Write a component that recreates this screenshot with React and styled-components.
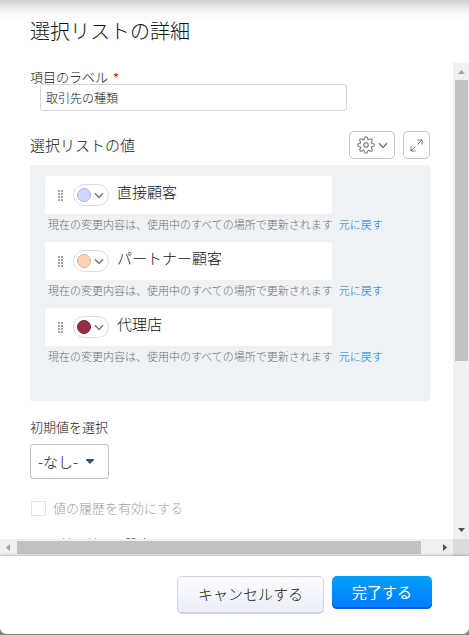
import React, { useState } from 'react';
import styled, { createGlobalStyle } from 'styled-components';
import { FiSettings } from 'react-icons/fi';


const initialValues = [
  { id: 1, label: '直接顧客', color: '#ced9ff', ring: '#a9b4dc' },
  { id: 2, label: 'パートナー顧客', color: '#ffd3b6', ring: '#dcae92' },
  { id: 3, label: '代理店', color: '#982b45', ring: '#7d2339' },
];

const App = () => {
  const [fieldLabel, setFieldLabel] = useState('取引先の種類');
  const [values, setValues] = useState(initialValues);

  const renameValue = (id, label) => {
    setValues(values.map((value) => (value.id === id ? { ...value, label } : value)));
  };

  return (
    <>
      <GlobalStyle />
      <Dialog role="dialog" aria-labelledby="dialog-title">
        <Header>
          <h1 id="dialog-title">選択リストの詳細</h1>
        </Header>

        <ScrollFrame>
          <Content>
            <FieldLabel htmlFor="field-label">
              項目のラベル <em>*</em>
            </FieldLabel>
            <TextInput
              id="field-label"
              value={fieldLabel}
              onChange={(e) => setFieldLabel(e.target.value)}
            />

            <SectionHead>
              <h2>選択リストの値</h2>
              <ToolButton type="button" aria-label="設定">
                <FiSettings size={18} strokeWidth={1.5} />
                <Chevron />
              </ToolButton>
              <ToolButton type="button" aria-label="拡大" $square>
                <ExpandIcon />
              </ToolButton>
            </SectionHead>

            <ValuePanel>
              {values.map((value) => (
                <ValueItem key={value.id} value={value} onRename={renameValue} />
              ))}
            </ValuePanel>

            <DefaultLabel htmlFor="default-value">初期値を選択</DefaultLabel>
            <SelectBox>
              <select id="default-value" defaultValue="">
                <option value="">-なし-</option>
              </select>
              <svg width="8" height="5" viewBox="0 0 8 5" aria-hidden="true">
                <path d="M0 0h8v1L4 5 0 1z" fill="#34566f" />
              </svg>
            </SelectBox>

            <CheckRow>
              <input type="checkbox" id="history" disabled />
              <label htmlFor="history">値の履歴を有効にする</label>
            </CheckRow>

            <SortHeading>並べ替えの設定</SortHeading>
          </Content>

          <VerticalBar>
            <Arrow direction="up" color="#a3a3a3" />
            <Track $vertical>
              <Thumb $size="63.5%" $vertical />
            </Track>
            <Arrow direction="down" color="#505050" />
          </VerticalBar>
          <HorizontalBar>
            <Arrow direction="left" color="#a3a3a3" />
            <Track>
              <Thumb $size="96.5%" />
            </Track>
            <Arrow direction="right" color="#505050" />
          </HorizontalBar>
          <Corner />
        </ScrollFrame>

        <Footer>
          <CancelButton type="button">キャンセルする</CancelButton>
          <DoneButton type="button">完了する</DoneButton>
        </Footer>
      </Dialog>
    </>
  );
};


const ValueItem = ({ value, onRename }) => {
  return (
    <div>
      <ValueCard>
        <Grip />
        <ColorPicker type="button" aria-label="色">
          <Swatch $color={value.color} $ring={value.ring} />
          <Chevron />
        </ColorPicker>
        <input
          aria-label="値"
          value={value.label}
          onChange={(e) => onRename(value.id, e.target.value)}
        />
      </ValueCard>
      <Hint>
        <span>現在の変更内容は、使用中のすべての場所で更新されます</span>
        <a href="#undo">元に戻す</a>
      </Hint>
    </div>
  );
};

const Chevron = () => (
  <svg width="10" height="7" viewBox="0 0 10 7" fill="none" aria-hidden="true">
    <path d="M1 1.2 5 5.4 9 1.2" stroke="#777" strokeWidth="1.5" />
  </svg>
);

const ExpandIcon = () => (
  <svg width="13" height="13" viewBox="0 0 13 13" fill="none" stroke="#777" aria-hidden="true">
    <path d="M7.5 5.5 12 1M7.5 1H12V5.5M5.5 7.5 1 12M1 7.5V12H5.5" />
  </svg>
);

const Grip = () => (
  <svg width="5" height="11" viewBox="0 0 5 11" fill="#a3a3a3" aria-hidden="true">
    {[0, 3, 6, 9].map((y) => (
      <path key={y} d={`M0 ${y}h2v2h-2zM3 ${y}h2v2h-2z`} />
    ))}
  </svg>
);

const arrowPaths = {
  up: 'M5 11 8.5 7 12 11z',
  down: 'M5 6 8.5 10 12 6z',
  left: 'M10 5 6 8.5 10 12z',
  right: 'M7 5 11 8.5 7 12z',
};

const Arrow = ({ direction, color }) => (
  <svg width="17" height="17" viewBox="0 0 17 17" aria-hidden="true">
    <path d={arrowPaths[direction]} fill={color} />
  </svg>
);


const GlobalStyle = createGlobalStyle`
  * {
    box-sizing: border-box;
  }
  body {
    margin: 0;
    background: #858585;
    color: #111;
    font-family: "Noto Sans CJK JP", sans-serif;
    font-weight: 300;
  }
  button, input, select {
    font: inherit;
    color: inherit;
  }
  h1, h2, h3 {
    margin: 0;
    font-weight: 300;
  }
  svg {
    display: block;
    flex: none;
  }
`;

const Dialog = styled.div`
  display: flex;
  flex-direction: column;
  height: calc(100vh - 1px);
  background: #fff;
  border-radius: 0 0 7px 7px;
  overflow: hidden;
`;

const Header = styled.header`
  padding: 16px 30px 17px;
  background: linear-gradient(#d0d0d0, #e9e9e9 7px, #fafafa 15px, #fff 23px);
  h1 {
    font-size: 20px;
    line-height: 30px;
  }
`;

const ScrollFrame = styled.div`
  flex: 1;
  min-height: 0;
  display: grid;
  grid-template-columns: minmax(0, 1fr) 16px;
  grid-template-rows: minmax(0, 1fr) 17px;
`;

const Content = styled.main`
  overflow: hidden;
  padding: 7px 23px 0 30px;
`;

const FieldLabel = styled.label`
  display: flex;
  gap: 5px;
  font-size: 13px;
  line-height: 14px;
  em {
    padding-top: 2px;
    color: #f00;
    font-style: normal;
    font-weight: 400;
    line-height: 12px;
  }
`;

const TextInput = styled.input`
  display: block;
  width: calc(100% - 93px);
  height: 27px;
  margin-left: 10px;
  padding: 0 5px;
  border: 1px solid #ccd6e2;
  border-radius: 3px;
  background: #fff;
  font-size: 12px;
`;

const SectionHead = styled.div`
  display: flex;
  align-items: center;
  gap: 8px;
  margin: 20px 0 6px;
  h2 {
    flex: 1;
    font-size: 15px;
    line-height: 28px;
  }
`;

const ToolButton = styled.button`
  display: flex;
  align-items: center;
  justify-content: center;
  gap: 3px;
  width: ${({ $square }) => ($square ? '27px' : '46px')};
  height: 28px;
  padding: 0;
  border: 1px solid #c3c3c9;
  border-radius: 5px;
  background: #fff;
  color: #777;
`;

const ValuePanel = styled.div`
  padding: 11px 15px 27px;
  border-radius: 4px;
  background: #eef2f5;
`;

const ValueCard = styled.div`
  display: flex;
  align-items: center;
  width: calc(100% - 83px);
  height: 38px;
  padding: 0 8px 0 13px;
  border-radius: 3px;
  background: #fff;
  input {
    flex: 1;
    min-width: 0;
    height: 30px;
    margin-bottom: 8px;
    padding: 0 8px;
    border: 0;
    background: transparent;
    font-size: 15px;
  }
`;

const ColorPicker = styled.button`
  display: flex;
  align-items: center;
  justify-content: space-between;
  width: 36px;
  height: 22px;
  margin-left: 10px;
  padding: 0 4px 0 3px;
  border: 1px solid #d5dfe3;
  border-radius: 11px;
  background: #fff;
`;

const Swatch = styled.span`
  width: 14px;
  height: 14px;
  border: 1px solid ${({ $ring }) => $ring};
  border-radius: 50%;
  background: ${({ $color }) => $color};
`;

const Hint = styled.p`
  display: flex;
  gap: 6px;
  margin: 0 0 8px 3px;
  font-size: 11px;
  line-height: 20px;
  white-space: nowrap;
  color: #707070;
  a {
    color: #0074f0;
    text-decoration: none;
  }
`;

const DefaultLabel = styled.label`
  display: block;
  margin: 16px 0 7px;
  font-size: 13px;
  line-height: 20px;
`;

const SelectBox = styled.div`
  position: relative;
  width: fit-content;
  select {
    display: block;
    height: 35px;
    padding: 0 30px 0 7px;
    border: 1px solid #c0c0ca;
    border-radius: 3px;
    background: #fff;
    font-size: 15px;
    appearance: none;
  }
  svg {
    position: absolute;
    top: 15px;
    right: 15px;
    pointer-events: none;
  }
`;

const CheckRow = styled.div`
  display: flex;
  align-items: center;
  gap: 7px;
  margin: 20px 0 17px 1px;
  color: #a0a0a0;
  font-size: 13px;
  line-height: 18px;
  input {
    width: 15px;
    height: 15px;
    margin: 0;
    border: 1px solid #e3e3e3;
    background: #fff;
    appearance: none;
  }
`;

const SortHeading = styled.h3`
  padding-left: 30px;
  font-size: 13px;
  line-height: 20px;
`;

const VerticalBar = styled.div`
  display: flex;
  flex-direction: column;
  align-items: center;
  overflow: hidden;
  background: #f0f0f0;
`;

const HorizontalBar = styled.div`
  display: flex;
  background: #f0f0f0;
`;

const Track = styled.div`
  flex: 1;
  align-self: stretch;
  padding: ${({ $vertical }) => ($vertical ? '0 1px 0 2px' : '2px 0')};
`;

const Thumb = styled.div`
  width: ${({ $vertical, $size }) => ($vertical ? '100%' : $size)};
  height: ${({ $vertical, $size }) => ($vertical ? $size : '100%')};
  background: #c1c1c1;
`;

const Corner = styled.div`
  background: #dcdcdc;
`;

const Footer = styled.footer`
  position: relative;
  display: flex;
  justify-content: flex-end;
  align-items: flex-start;
  gap: 8px;
  padding: 20px 37px 20px 20px;
  background: #fff;
  box-shadow: 0 0 3px rgba(0, 0, 0, 0.4);
`;

const FooterButton = styled.button`
  padding: 0 20px 2px;
  border-radius: 5px;
  font-size: 15px;
`;

const CancelButton = styled(FooterButton)`
  height: 38px;
  border: 1px solid #d0d5e2;
  border-bottom-width: 2px;
  background: linear-gradient(#fdfdff, #e9edf6);
`;

const DoneButton = styled(FooterButton)`
  height: 33px;
  border: 0;
  background: linear-gradient(#02a1f8, #0279ff);
  box-shadow: inset 0 -2px 0 #0264d2;
  color: #fff;
  font-weight: 400;
`;

export default App;
